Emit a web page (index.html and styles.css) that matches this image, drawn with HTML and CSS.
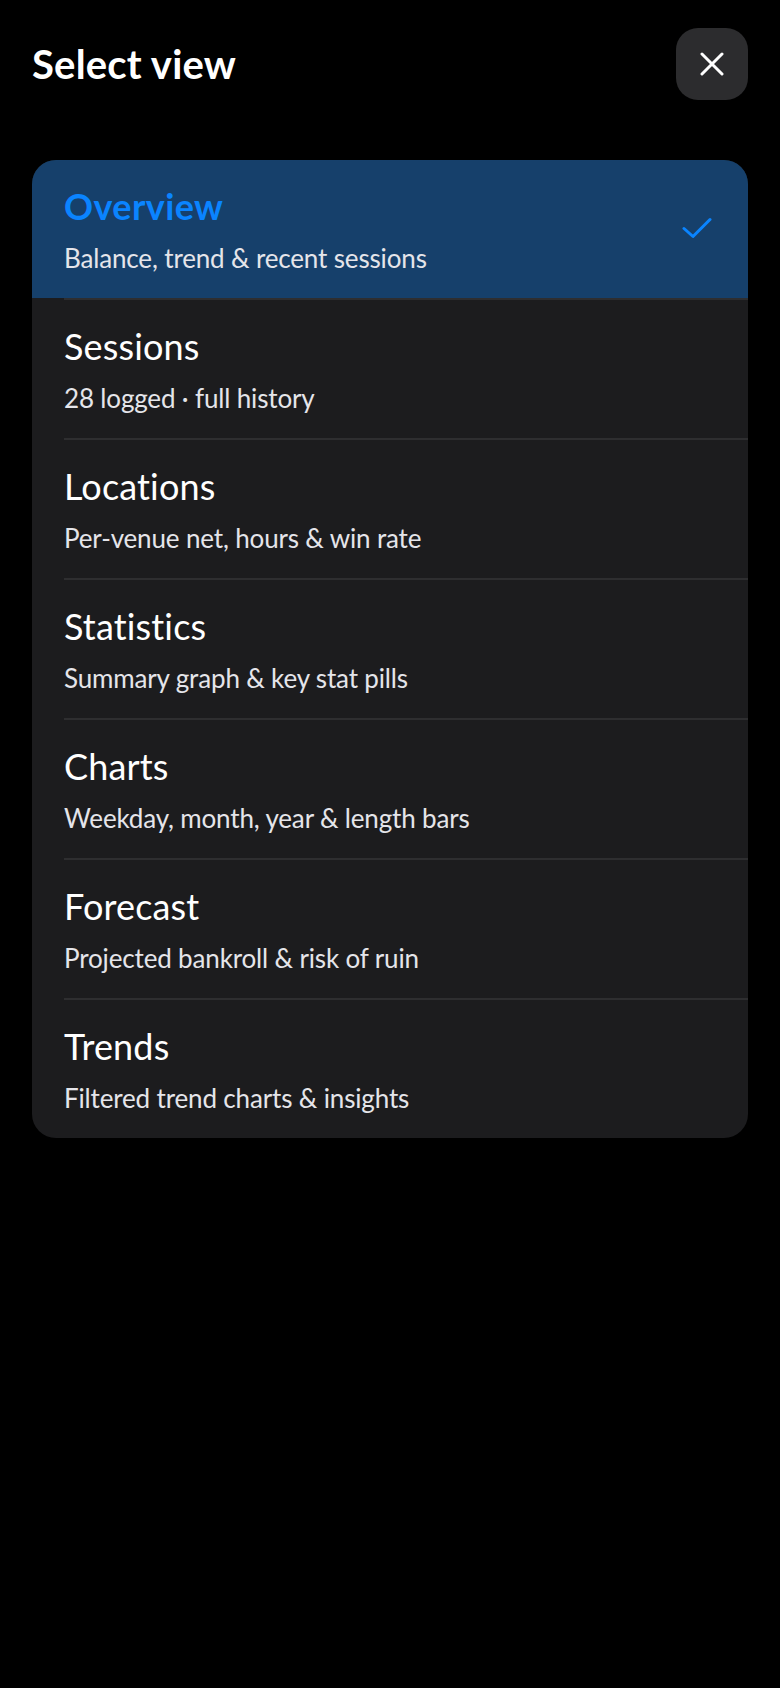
FILE: index.html
```html
<!DOCTYPE html>
<html lang="en">
<head>
    <meta charset="UTF-8">
    <meta name="viewport" content="width=device-width, initial-scale=1.0">
    <title>Select view</title>
    <link rel="stylesheet" href="styles.css">
</head>
<body>
    <div class="sheet">
        <div class="header">
            <h1>Select view</h1>
            <button class="close-btn" aria-label="Close">
                <svg width="24" height="24" viewBox="0 0 24 24">
                    <path d="M2 2 L22 22 M22 2 L2 22" stroke="#fff" stroke-width="3" stroke-linecap="round" fill="none"/>
                </svg>
            </button>
        </div>

        <div class="view-list">
            <div class="view-row selected">
                <div class="view-text">
                    <div class="view-title">Overview</div>
                    <div class="view-sub">Balance, trend &amp; recent sessions</div>
                </div>
                <svg class="check" width="32" height="24" viewBox="0 0 32 24">
                    <path d="M4 11.5 L13 19.5 L30 2.5" stroke="#0a84ff" stroke-width="3" stroke-linecap="round" stroke-linejoin="round" fill="none"/>
                </svg>
            </div>
            <div class="view-row">
                <div class="view-text">
                    <div class="view-title">Sessions</div>
                    <div class="view-sub">28 logged · full history</div>
                </div>
            </div>
            <div class="view-row">
                <div class="view-text">
                    <div class="view-title">Locations</div>
                    <div class="view-sub">Per-venue net, hours &amp; win rate</div>
                </div>
            </div>
            <div class="view-row">
                <div class="view-text">
                    <div class="view-title">Statistics</div>
                    <div class="view-sub">Summary graph &amp; key stat pills</div>
                </div>
            </div>
            <div class="view-row">
                <div class="view-text">
                    <div class="view-title">Charts</div>
                    <div class="view-sub">Weekday, month, year &amp; length bars</div>
                </div>
            </div>
            <div class="view-row">
                <div class="view-text">
                    <div class="view-title">Forecast</div>
                    <div class="view-sub">Projected bankroll &amp; risk of ruin</div>
                </div>
            </div>
            <div class="view-row">
                <div class="view-text">
                    <div class="view-title">Trends</div>
                    <div class="view-sub">Filtered trend charts &amp; insights</div>
                </div>
            </div>
        </div>
    </div>
</body>
</html>
```

FILE: styles.css
```css
body {
    margin: 0;
    background: #000;
    font-family: 'Lato', 'Liberation Sans', sans-serif;
    color: #fff;
}

.sheet {
    padding: 28px 32px 0 32px;
}

.header {
    display: flex;
    justify-content: space-between;
    align-items: center;
}

.header h1 {
    margin: 0;
    font-size: 40px;
    font-weight: 700;
    line-height: 46px;
    letter-spacing: 0.2px;
}

.close-btn {
    width: 72px;
    height: 72px;
    border: none;
    border-radius: 22px;
    background: #2c2c2e;
    display: flex;
    align-items: center;
    justify-content: center;
    padding: 0;
}

.view-list {
    margin-top: 60px;
    background: #1c1c1e;
    border-radius: 24px;
    overflow: hidden;
}

.view-row {
    display: flex;
    align-items: center;
    justify-content: space-between;
    height: 138px;
    padding: 0 36px 0 32px;
}

/* separator, inset like an iOS list */
.view-row + .view-row {
    border-top: 2px solid #2e2e30;
    margin-left: 32px;
    padding-left: 0;
}

.view-row.selected {
    background: #16406b;
}

.view-text {
    display: flex;
    flex-direction: column;
}

.view-title {
    font-size: 36px;
    line-height: 44px;
    letter-spacing: 0.15px;
    margin-bottom: 14px;
}

.selected .view-title {
    color: #0a84ff;
    font-weight: 700;
    letter-spacing: 0.4px;
}

.view-sub {
    font-size: 26px;
    line-height: 32px;
    letter-spacing: -0.15px;
    color: #e5e5ea;
}

.check {
    flex-shrink: 0;
}
```
